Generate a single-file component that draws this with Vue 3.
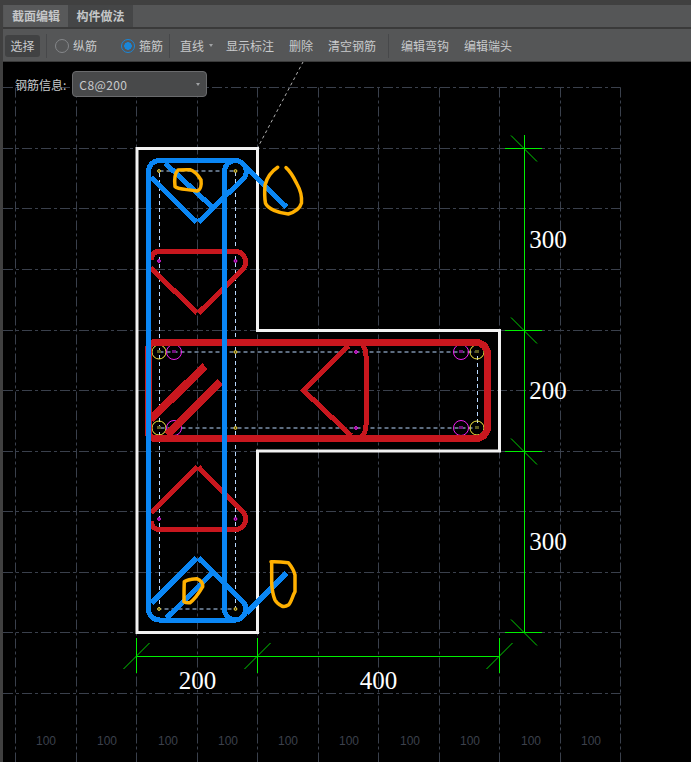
<template>
  <div class="page">
    <!-- tabs -->
    <div class="tabs">
      <div class="tab active">截面编辑</div>
      <div class="tab">构件做法</div>
    </div>

    <!-- toolbar -->
    <div class="toolbar">
      <button class="btn-select">选择</button>
      <span class="sep sep-first"></span>
      <label class="radio"><i class="dot"></i>纵筋</label>
      <label class="radio radio-on"><i class="dot"></i>箍筋</label>
      <span class="sep sep-mid"></span>
      <span class="tool tool-line">直线<i class="caret"></i></span>
      <span class="tool">显示标注</span>
      <span class="tool">删除</span>
      <span class="tool tool-last">清空钢筋</span>
      <span class="sep sep-right"></span>
      <span class="tool">编辑弯钩</span>
      <span class="tool">编辑端头</span>
    </div>

    <!-- drawing -->
    <div class="canvas">
      <div class="info">
        <span class="info-label">钢筋信息:</span>
        <div class="info-select">C8@200<i class="caret"></i></div>
      </div>

      <svg class="drawing" width="688" height="700" viewBox="3 62 688 700">
        <!-- grid -->
        <g class="grid">
          <line v-for="x in gridX" :key="'v' + x" :x1="x" y1="87.5" :x2="x" y2="762" />
          <line v-for="y in gridY" :key="'h' + y" x1="3" :y1="y" x2="620.5" :y2="y" />
        </g>
        <text v-for="x in labelX" :key="'l' + x" class="grid-label" :x="x" y="745">100</text>

        <line class="leader" x1="257" y1="149" x2="303" y2="62" />

        <!-- section outline -->
        <path class="outline" d="M137 148.5H257.5V330.5H499.5V451H257.5V632.5H137Z" />

        <!-- dashed guide -->
        <g class="guide">
          <path d="M159.5 171H235.5V609H159.5Z" />
          <path d="M159.5 352H477.5V428H159.5" />
        </g>

        <!-- bar points -->
        <g class="ring-yellow">
          <circle v-for="p in yellowRings" :key="p[0] + '-' + p[1]" :cx="p[0]" :cy="p[1]" r="7" />
        </g>
        <g class="ring-magenta">
          <circle v-for="p in magentaRings" :key="p[0] + '-' + p[1]" :cx="p[0]" :cy="p[1]" r="7.5" />
        </g>
        <rect v-for="p in yellowRings" :key="'c' + p[0] + p[1]" :x="p[0] - 2" :y="p[1] - 2" width="4" height="3" fill="#5a5a20" />
        <rect v-for="p in magentaRings" :key="'c' + p[0] + p[1]" :x="p[0] - 2" :y="p[1] - 2" width="4" height="3" fill="#70107a" />

        <!-- red bars -->
        <g class="red" shape-rendering="crispEdges">
          <path class="thick" d="M148.5 431V349A6.5 6.5 0 0 1 155 342.5H476A11.5 11.5 0 0 1 487.5 354V427A11.5 11.5 0 0 1 476 438.5H155A6.5 6.5 0 0 1 148.5 431" />
          <path class="hook" d="M205 366L151 419M220 382L167 435" />
          <path d="M348.5 346L303.5 390.5L351 435.5" />
          <path d="M362 345Q366 348 366 356V425Q366 433 361 437" />
          <path d="M197 313L151 268M151 260Q152 251.5 159 251.5H235A10.5 10.5 0 0 1 243 269L198.5 313" />
          <path d="M197 467L151 513M151 521Q152 529.5 159 529.5H235A10.5 10.5 0 0 0 243 512L198.5 467" />
        </g>

        <!-- blue stirrup -->
        <g class="blue" shape-rendering="crispEdges">
          <path class="thick" d="M148.5 171A11 11 0 0 1 159.5 160.5H235.5A11 11 0 0 0 224.5 171.5V609A11 11 0 0 0 235.5 620H159.5A11 11 0 0 1 148.5 609Z" />
          <path d="M235.5 160.5A11 11 0 0 1 244 178L198.5 222M196.5 222L151.5 177.5" />
          <path d="M165 163L212 207M244 165L286.5 207" />
          <path d="M235.5 620A11 11 0 0 0 244 603L198.5 558M196.5 558L151.5 603" />
          <path d="M166.5 618L212 573M246.5 613L286.5 573" />
        </g>

        <g class="pin-yellow">
          <circle v-for="p in yellowDots" :key="p[0] + '-' + p[1]" :cx="p[0]" :cy="p[1]" r="1.4" />
        </g>
        <g class="pin-magenta">
          <circle v-for="p in magentaDots" :key="p[0] + '-' + p[1]" :cx="p[0]" :cy="p[1]" r="1.4" />
        </g>

        <!-- hand marks -->
        <g class="mark">
          <path d="M178 170C174 174 174.5 182 175 186.5C178 190 188 189 197 191C201 190 201.5 184 201 180C198 175 194 171 190 169.7C186 169.5 182 169.7 178 170" />
          <path d="M277.7 167.3C272 171 267 178 265 185C264.5 192 264.5 198 265.5 203.3C268 209 278 213 288.3 214C295 212 300 208 301.5 203C302 197 301 191 297 184C294 178 290 171 286 167.7" />
          <path d="M191.7 579.3C188 580 186 580.5 184.3 581.7C184 588 184 595 184 601.7C186 603 188 603 190 602.7C194 600 199 593 202.7 586.7C203 583 200 580 196.7 578.7C195 578.7 193 579 191.7 579.3" />
          <path d="M271 561.7C277 561.5 283 562 288.3 562.7C291 566 294 571 295 575V591.7C292 597 291 603 288.3 605C286 606.5 283 606.5 281.7 606C278 604 276 602 275 600C273 595 272 589 271.7 583.3V561.7" />
        </g>

        <!-- dimensions -->
        <g class="dim">
          <path d="M524.5 135V632.5M505 148.5H542M505 330.5H542M505 451.5H542M505 632.5H542" />
          <path d="M136.5 656.5H499.5M136.5 638V673M257.5 638V673M499.5 638V673" />
        </g>
        <g class="dim-tick">
          <path v-for="y in [148.5, 330.5, 451.5, 632.5]" :key="y" :d="`M511 ${y - 13}L537 ${y + 13}`" />
          <path v-for="x in [136.5, 257.5, 499.5]" :key="x" :d="`M${x - 13} 669L${x + 13} 643`" />
        </g>
        <text class="dim-text" x="548" y="248">300</text>
        <text class="dim-text" x="548" y="399">200</text>
        <text class="dim-text" x="548" y="550">300</text>
        <text class="dim-text" x="197.5" y="689">200</text>
        <text class="dim-text" x="378.5" y="689">400</text>
      </svg>
    </div>
  </div>
</template>

<script setup>
const gridX = [15.5, 76.5, 136.5, 197.5, 257.5, 318.5, 378.5, 439.5, 499.5, 560.5, 620.5]
const gridY = [87.5, 148.5, 208.5, 269.5, 330.5, 390.5, 451.5, 511.5, 572.5, 632.5, 693.5]
const labelX = [46, 107, 168, 228, 288, 349, 410, 470, 531, 591]

const yellowDots = [[159, 171], [235.5, 171], [235.5, 352], [235.5, 428], [159, 609], [235.5, 609]]
const magentaDots = [[159, 261], [235.5, 261], [159, 519], [235.5, 519], [356, 352], [356, 428]]
const yellowRings = [[159, 352], [159, 428], [477, 352], [477, 428]]
const magentaRings = [[174, 352], [174, 428], [461, 352], [461, 428]]
</script>

<style>
html,
body {
  margin: 0;
  background: #000;
}
</style>

<style scoped>
.page {
  width: 691px;
  height: 762px;
  box-sizing: border-box;
  padding: 5px 0 0 3px;
  display: flex;
  flex-direction: column;
  overflow: hidden;
  background: #404040;
  font-family: "Noto Sans CJK SC", "Liberation Sans", sans-serif;
  font-size: 12px;
  color: #c8cacc;
}

/* TABS */
.tabs {
  display: flex;
  height: 24px;
  box-sizing: border-box;
  padding-left: 1px;
  background: #555657;
  border-bottom: 2px solid #3a3a3a;
  flex-shrink: 0;
}

.tab {
  width: 64px;
  line-height: 22px;
  text-align: center;
  font-weight: 700;
  color: #c4c6c8;
}

.tab.active {
  background: #58595a;
}

.tab:not(.active) {
  width: 65px;
  background: #454647;
}

/* TOOLBAR */
.toolbar {
  display: flex;
  align-items: center;
  height: 33px;
  box-sizing: border-box;
  padding: 1px 0 0 2px;
  background: #555657;
  border-bottom: 1px solid #3a3a3a;
  flex-shrink: 0;
}

.btn-select {
  width: 35px;
  height: 22px;
  padding: 0;
  border: 0;
  border-radius: 3px;
  background: #414243;
  color: #c8cacc;
  font: inherit;
}

.sep {
  width: 1px;
  height: 24px;
  background: #47484a;
}

.sep-first {
  margin: 0 8px 0 6px;
}

.sep-mid {
  margin: 0 10px 0 6px;
}

.sep-right {
  margin: 0 12px;
}

.radio {
  display: flex;
  align-items: center;
  gap: 4px;
  margin-right: 24px;
}

.radio-on {
  margin-right: 0;
}

.dot {
  width: 14px;
  height: 14px;
  box-sizing: border-box;
  border: 1px solid #85878a;
  border-radius: 50%;
}

.radio-on .dot {
  border-color: #1a86d8;
  background: radial-gradient(circle, #1a86d8 0 3.5px, transparent 4px);
}

.tool {
  margin-right: 15px;
}

.tool-last {
  margin-right: 0;
}

.tool-line {
  display: flex;
  align-items: center;
  margin-right: 13.5px;
}

.caret {
  width: 0;
  height: 0;
  margin-left: 4.5px;
  border: 2.5px solid transparent;
  border-top: 3px solid #a0a2a4;
  border-bottom: 0;
}

/* CANVAS */
.canvas {
  position: relative;
  flex: 1;
  background: #000;
}

.drawing {
  display: block;
}

.info {
  position: absolute;
  top: 9px;
  left: 12px;
  display: flex;
  align-items: center;
  gap: 6px;
  z-index: 1;
}

.info-select {
  display: flex;
  align-items: center;
  justify-content: space-between;
  width: 135px;
  height: 26px;
  box-sizing: border-box;
  padding: 0 6px;
  border: 1px solid #6a6b6d;
  border-radius: 4px;
  background: #48494a;
  letter-spacing: 0.4px;
}

/* drawing parts */
.grid line {
  stroke: #3a404c;
  stroke-width: 1;
  stroke-dasharray: 10 3 3 3;
}

.grid-label {
  fill: #3c414c;
  font-family: "Liberation Sans", sans-serif;
  font-size: 12px;
  text-anchor: middle;
}

.leader {
  stroke: #b0b0b0;
  stroke-width: 1;
  stroke-dasharray: 3 3;
}

.outline {
  fill: none;
  stroke: #f2f2f2;
  stroke-width: 3;
}

.guide path {
  fill: none;
  stroke: #b8d8ff;
  stroke-width: 1;
  stroke-dasharray: 4 3;
}

.red path {
  fill: none;
  stroke: #c8171e;
  stroke-width: 5;
}

.red .thick {
  stroke-width: 7;
}

.red .hook {
  stroke-width: 8;
}

.blue path {
  fill: none;
  stroke: #0a86f4;
  stroke-width: 5;
}

.blue .thick {
  stroke-width: 5;
}

.pin-yellow circle {
  fill: #40401a;
  stroke: #f5d63a;
  stroke-width: 1;
}

.pin-magenta circle {
  fill: #60106a;
  stroke: #f020f0;
  stroke-width: 1;
}

.ring-yellow circle {
  fill: none;
  stroke: #f5e640;
  stroke-width: 1;
}

.ring-magenta circle {
  fill: none;
  stroke: #f020f0;
  stroke-width: 1;
}

.mark path {
  fill: none;
  stroke: #ffb000;
  stroke-width: 3.5;
  stroke-linecap: round;
  stroke-linejoin: round;
}

.dim path {
  fill: none;
  stroke: #00f000;
  stroke-width: 1;
}

.dim-tick path {
  fill: none;
  stroke: #00d000;
  stroke-width: 1;
}

.dim-text {
  fill: #fff;
  font-family: "Liberation Serif", serif;
  font-size: 25px;
  text-anchor: middle;
}
</style>
